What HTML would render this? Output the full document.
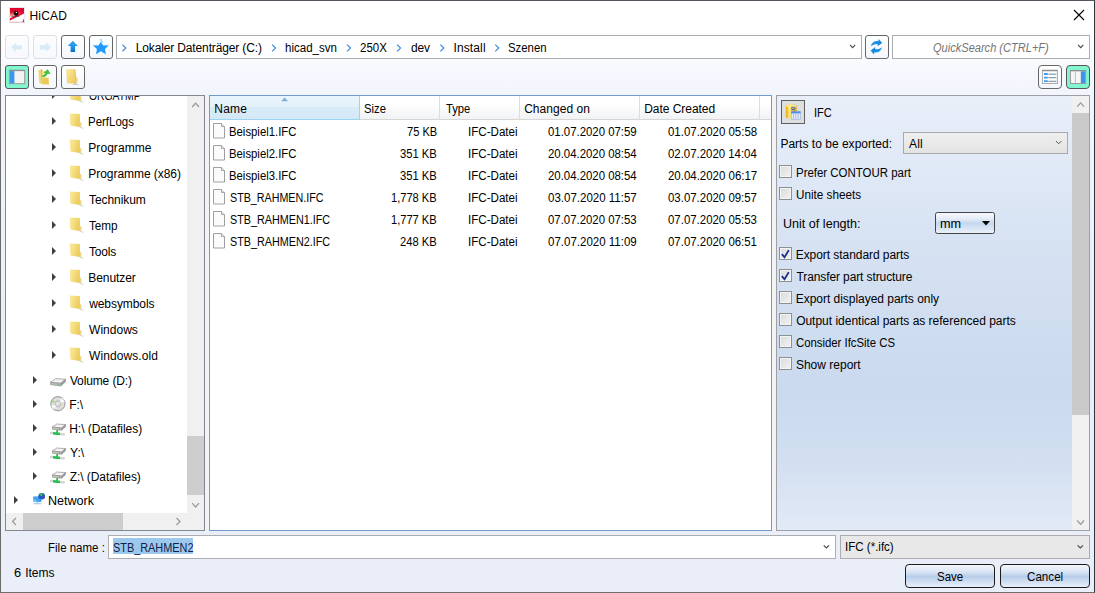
<!DOCTYPE html>
<html lang="en"><head><meta charset="utf-8"><title>HiCAD</title>
<style>
*{box-sizing:border-box;margin:0;padding:0}
html,body{width:1095px;height:593px;overflow:hidden;background:#fff}
body{font-family:"Liberation Sans",sans-serif;font-size:12px;color:#000}
#win{position:absolute;left:0;top:0;width:1095px;height:593px;overflow:hidden;
 background:linear-gradient(to bottom,#ffffff 0,#ffffff 31px,#f2f5fc 90px,#e9eef9 330px,#e9eef9 100%)}
.abs{position:absolute}
.t{transform-origin:0 50%;position:absolute;white-space:pre;line-height:16px;height:16px;font-size:12px}
#frame{left:0;top:0;width:1095px;height:593px;border:1px solid #5a5f68;border-top-color:#50555e;border-right-color:#30343c;border-left-color:#6b6b6b;border-bottom-color:#6e6e6e;z-index:50;pointer-events:none}
#titlebar{left:1px;top:1px;width:1093px;height:30px;background:#fff}
.btn{position:absolute;width:24px;height:24px;border:1px solid #666;border-radius:3px;
 background:linear-gradient(to bottom,#ffffff,#f3f6fb)}
.btn.dis{border-color:#dcdfe6;background:linear-gradient(to bottom,#fdfdfe,#f6f8fc)}
.btn.on{background:#80f7cf;border-color:#5a5558}

.box{position:absolute;background:#fff;border:1px solid #abadb3}
.panel{position:absolute;background:#fff;border:1px solid #828790}
.sb{position:absolute;background:#f0f0f0}
.thumb{position:absolute;background:#cdcdcd}
.arrow{position:absolute;width:0;height:0;border-top:4px solid transparent;border-bottom:4px solid transparent;border-left:4px solid #404040}
.hdr{position:absolute;top:96px;height:24px;border-right:1px solid #dcdddf;border-bottom:1px solid #d6d6d6;background:linear-gradient(to bottom,#ffffff 0,#ffffff 35%,#f1f2f4 100%)}
.cb{position:absolute;width:13px;height:13px;left:779px;border:1px solid #8e8f8f;background:linear-gradient(135deg,#d9dadb,#f3f3f3);box-shadow:inset 0 0 0 1px #f4f4f4}
.pbtn{position:absolute;height:24px;width:90px;top:564px;border:1px solid #1c1c1c;border-radius:4px;
 background:linear-gradient(to bottom,#f4f7fc 0,#dbe6f5 30%,#b7cde9 52%,#c9daf0 70%,#e9f0fa 100%)}
.btn.r4{border-radius:4px}

</style></head>
<body>
<div id="win">
<div class="abs" id="titlebar"></div>
<!-- app icon -->
<svg class="abs" style="left:9px;top:7px" width="16" height="16" viewBox="0 0 16 16">
 <defs><linearGradient id="gapp" x1="0" y1="0" x2="0" y2="1"><stop offset="0" stop-color="#dc0028"/><stop offset="0.280" stop-color="#e00a2e"/><stop offset="0.550" stop-color="#f4a090"/><stop offset="0.700" stop-color="#ffffff"/><stop offset="1" stop-color="#ffffff"/></linearGradient></defs>
 <rect x="0" y="0" width="16" height="16" fill="#e3e9ee"/>
 <rect x="1" y="1" width="14" height="14" fill="url(#gapp)"/>
 <path d="M1 12.800 L15 5.600 L15 15 L1 15 Z" fill="#ffffff"/>
 <path d="M1 11.200 L15 4.800 L15 6.400 L1 13.400 Z" fill="#e0082c"/>
 <path d="M13.400 15 L15 11.500 L15 15 Z" fill="#e0082c"/>
 <path d="M2.500 9.300 L10.500 9.600" stroke="#333" stroke-width="0.600"/>
 <circle cx="7.100" cy="6.400" r="2.300" fill="#0c0c10"/><circle cx="7.400" cy="5.500" r="0.700" fill="#e8e8e8"/>
 <rect x="0.500" y="14.800" width="15" height="0.700" fill="#e7a0ac"/>
</svg>
<!-- close -->
<svg class="abs" style="left:1073px;top:9px" width="12" height="12" viewBox="0 0 12 12"><path d="M1 1 L11 11 M11 1 L1 11" stroke="#000" stroke-width="1.1" fill="none"/></svg>

<!-- toolbar row 1 -->
<div class="btn dis" style="left:5px;top:35px"></div><svg class="abs" style="left:5px;top:35px" width="24" height="24" viewBox="0 0 24 24"><path d="M6.100 12.300 L10.800 7.500 L10.800 10.200 L17 10.200 L17 14.500 L10.800 14.500 L10.800 17 Z" fill="#d7ebf8"/></svg>
<div class="btn dis" style="left:33px;top:35px"></div><svg class="abs" style="left:33px;top:35px" width="24" height="24" viewBox="0 0 24 24"><path d="M18.100 12.300 L13.200 7.500 L13.200 10.200 L6.900 10.200 L6.900 14.500 L13.200 14.500 L13.200 17 Z" fill="#d7ebf8"/></svg>
<div class="btn " style="left:61px;top:35px"></div><svg class="abs" style="left:61px;top:35px" width="24" height="24" viewBox="0 0 24 24"><defs><linearGradient id="gup" x1="0" y1="0" x2="0" y2="1"><stop offset="0" stop-color="#36a8f4"/><stop offset="0.6" stop-color="#1d8fe6"/><stop offset="1" stop-color="#0a69c2"/></linearGradient></defs><path d="M11.800 5.800 L16.800 10.900 L14.100 10.900 L14.100 17.100 L9.600 17.100 L9.600 10.900 L6.800 10.900 Z" fill="url(#gup)"/></svg>
<div class="btn " style="left:89px;top:35px"></div><svg class="abs" style="left:89px;top:35px" width="24" height="24" viewBox="0 0 24 24"><polygon points="11.700,7 14.200,10.500 19.700,10.300 16,14 16.900,19.200 11.800,16.300 7.100,19.300 7.900,14 3.800,10.300 9.400,10.500" fill="#1e9bff"/><path d="M12.100 4.300 q-1.300 0.800 0.300 1.500 q1.500 0.700 0.500 1.800" fill="none" stroke="#2fa2fb" stroke-width="1"/></svg>
<div class="btn " style="left:865px;top:35px"></div><svg class="abs" style="left:865px;top:35px" width="24" height="24" viewBox="0 0 24 24"><defs><linearGradient id="grf" x1="0" y1="0" x2="1" y2="1"><stop offset="0" stop-color="#2aa6f6"/><stop offset="1" stop-color="#0d78d0"/></linearGradient></defs><path d="M5.800 11.200 C6.600 7.200 10 5.500 13.300 6.100 L13.800 4 L17.200 8 L12.400 11.300 L12.900 9.300 C10.500 8.900 8 9.500 5.800 11.200 Z" fill="url(#grf)"/><path d="M5.800 11.200 C6.600 7.200 10 5.500 13.300 6.100 L13.800 4 L17.200 8 L12.400 11.300 L12.900 9.300 C10.500 8.900 8 9.500 5.800 11.200 Z" fill="url(#grf)" transform="rotate(180 11.400 11.700)"/></svg>
<div class="btn on" style="left:5px;top:65px"></div><svg class="abs" style="left:5px;top:65px" width="24" height="24" viewBox="0 0 24 24"><rect x="4.300" y="5.300" width="15.400" height="13.400" fill="#f3f3f3" stroke="#9b8f94" stroke-width="0.900"/><rect x="4.300" y="4.900" width="15.400" height="1.200" fill="#8d8d8d"/><rect x="4.800" y="6.100" width="4.600" height="12.200" fill="#3c96e6"/></svg>
<div class="btn " style="left:33px;top:65px"></div><svg class="abs" style="left:33px;top:65px" width="24" height="24" viewBox="0 0 24 24"><path d="M5.300 5.500 L8 4 L9.300 5 L9.300 19.300 L6.300 18 Z" fill="#f1d67a"/><path d="M8 4 L9.300 5 L9.300 19.300 L8.800 19 Z" fill="#d8b54e"/>
<path d="M9.300 12.500 L15.500 12.500 L16 19.600 L9.300 19.300 Z" fill="#ecc954"/><path d="M9.300 6 L12 6 L12 12.500 L9.300 12.500 Z" fill="#f3dc88"/>
<path d="M9.800 12.800 C12.500 12.800 14.500 11 14.800 8.400 L17.800 8.400 L14 4.200 L10.800 8.400 L12.600 8.400 C12.400 10 11.500 11.200 9.800 11.600 Z" fill="#35c13c" transform="rotate(12 14 8)"/></svg>
<div class="btn " style="left:61px;top:65px"></div><svg class="abs" style="left:61px;top:65px" width="24" height="24" viewBox="0 0 24 24"><defs><linearGradient id="gfo" x1="0" y1="0" x2="1" y2="1"><stop offset="0" stop-color="#fae9a0"/><stop offset="1" stop-color="#ecc954"/></linearGradient></defs><path d="M5 4.400 L13.400 4 L14.300 5 L15 18.700 L6 18.200 Z" fill="url(#gfo)"/><path d="M13.400 4 L14.300 5 L15 18.700 L14.200 18.400 Z" fill="#d9b851"/>
<ellipse cx="15.300" cy="15" rx="1" ry="2.600" fill="#f1dd8f" stroke="#d4b24a" stroke-width="0.400"/><path d="M12 19.200 L17.500 19.500" stroke="#c4c4c4" stroke-width="1"/></svg>
<div class="btn r4" style="left:1038px;top:65px"></div><svg class="abs" style="left:1038px;top:65px" width="24" height="24" viewBox="0 0 24 24"><rect x="4.400" y="5.300" width="15" height="13.200" fill="#fbfbfb" stroke="#a3a3a3" stroke-width="0.900"/><rect x="4.400" y="4.900" width="15" height="1.300" fill="#8c8c8c"/>
<path d="M6 9 h3.800 M6 12.600 h3.800 M6 16.200 h3.800" stroke="#3b9bf5" stroke-width="1.800"/><path d="M10.400 9.200 h8 M10.400 12.700 h8 M10.400 16.300 h8" stroke="#5a7d92" stroke-width="0.900"/></svg>
<div class="btn on r4" style="left:1066px;top:65px"></div><svg class="abs" style="left:1066px;top:65px" width="24" height="24" viewBox="0 0 24 24"><rect x="4.400" y="5.500" width="15.300" height="13" fill="#f8f6f5" stroke="#9b8f94" stroke-width="0.900"/><rect x="4.400" y="5.100" width="15.300" height="1.200" fill="#8d8d8d"/>
<rect x="14.800" y="6.300" width="4.400" height="11.800" fill="#3c96e6"/><path d="M9.400 6.300 v11.800" stroke="#8cc4f2" stroke-width="0.900"/></svg>

<div class="box" style="left:116px;top:35px;width:746px;height:24px"></div>
<svg class="abs" style="left:120px;top:35px" width="740" height="24" viewBox="0 0 740 24" fill="none" stroke="#3c89dc" stroke-width="1.150">
<path d="M2.3 9.600 L5.9 13 L2.3 16.400"/>
<path d="M152.0 9.600 L155.6 13 L152.0 16.400"/>
<path d="M227.0 9.600 L230.6 13 L227.0 16.400"/>
<path d="M277.0 9.600 L280.6 13 L277.0 16.400"/>
<path d="M320.3 9.600 L323.9 13 L320.3 16.400"/>
<path d="M375.2 9.600 L378.8 13 L375.2 16.400"/>
<path d="M730 9.900 L732.600 12.600 L735.200 9.900" stroke="#4a4a4a" stroke-width="1.150"/>
</svg>
<div class="box" style="left:892px;top:35px;width:198px;height:24px"></div>
<svg class="abs" style="left:1076px;top:42px" width="10" height="10" viewBox="0 0 10 10" fill="none" stroke="#4a4a4a" stroke-width="1.150"><path d="M2.100 2.900 L4.700 5.600 L7.300 2.900"/></svg>

<!-- toolbar row 2 -->

<!-- tree panel -->
<div class="panel" id="tree" style="left:5px;top:95px;width:200px;height:436px;overflow:hidden">
 <div class="sb" style="left:181px;top:0;width:17px;height:434px"></div>
 <div class="sb" style="left:0;top:417px;width:198px;height:17px"></div>
 <div class="thumb" style="left:181px;top:340px;width:17px;height:59px"></div>
 <div class="thumb" style="left:17px;top:417px;width:100px;height:17px"></div>
 <svg class="abs" style="left:181px;top:0" width="17" height="434" viewBox="0 0 17 434" fill="none" stroke="#979797" stroke-width="1.200"><path d="M5.200 11 L8.600 7.200 L12 11"/><path d="M5.200 407.200 L8.600 411 L12 407.200"/></svg>
 <svg class="abs" style="left:0;top:417px" width="181" height="17" viewBox="0 0 181 17" fill="none" stroke="#979797" stroke-width="1.200"><path d="M10 5 L6.5 8.5 L10 12"/><path d="M170.500 5 L174 8.5 L170.5 12"/></svg>
</div>
<div class="abs" style="left:6px;top:96px;width:181px;height:417px;overflow:hidden"><div class="abs" style="left:-6px;top:-96px"><div class="arrow" style="left:52px;top:91px"></div>
<svg class="abs" style="left:69px;top:87px" width="16" height="17" viewBox="0 0 16 17"><defs><linearGradient id="gfd" x1="0" y1="0" x2="1" y2="0.300"><stop offset="0" stop-color="#faeaa2"/><stop offset="0.500" stop-color="#f5de80"/><stop offset="1" stop-color="#ebcc5e"/></linearGradient></defs><path d="M10.500 13.600 L14.600 15 L13.800 15.700 L10.500 14.300 Z" fill="#bdbdbd" opacity="0.800"/><path d="M0.800 0.400 L10.900 1.100 L10.900 13.900 L1.300 12.500 Z" fill="url(#gfd)"/><path d="M10.900 9.200 Q12.300 9 12.200 10.500 L12.200 13.400 L10.900 13.900 Z" fill="#f3e3a0" stroke="#dcc060" stroke-width="0.400"/></svg>
<div class="arrow" style="left:52px;top:117px"></div>
<svg class="abs" style="left:69px;top:113px" width="16" height="17" viewBox="0 0 16 17"><defs><linearGradient id="gfd" x1="0" y1="0" x2="1" y2="0.300"><stop offset="0" stop-color="#faeaa2"/><stop offset="0.500" stop-color="#f5de80"/><stop offset="1" stop-color="#ebcc5e"/></linearGradient></defs><path d="M10.500 13.600 L14.600 15 L13.800 15.700 L10.500 14.300 Z" fill="#bdbdbd" opacity="0.800"/><path d="M0.800 0.400 L10.900 1.100 L10.900 13.900 L1.300 12.500 Z" fill="url(#gfd)"/><path d="M10.900 9.200 Q12.300 9 12.200 10.500 L12.200 13.400 L10.900 13.900 Z" fill="#f3e3a0" stroke="#dcc060" stroke-width="0.400"/></svg>
<div class="arrow" style="left:52px;top:143px"></div>
<svg class="abs" style="left:69px;top:139px" width="16" height="17" viewBox="0 0 16 17"><defs><linearGradient id="gfd" x1="0" y1="0" x2="1" y2="0.300"><stop offset="0" stop-color="#faeaa2"/><stop offset="0.500" stop-color="#f5de80"/><stop offset="1" stop-color="#ebcc5e"/></linearGradient></defs><path d="M10.500 13.600 L14.600 15 L13.800 15.700 L10.500 14.300 Z" fill="#bdbdbd" opacity="0.800"/><path d="M0.800 0.400 L10.900 1.100 L10.900 13.900 L1.300 12.500 Z" fill="url(#gfd)"/><path d="M10.900 9.200 Q12.300 9 12.200 10.500 L12.200 13.400 L10.900 13.900 Z" fill="#f3e3a0" stroke="#dcc060" stroke-width="0.400"/></svg>
<div class="arrow" style="left:52px;top:169px"></div>
<svg class="abs" style="left:69px;top:165px" width="16" height="17" viewBox="0 0 16 17"><defs><linearGradient id="gfd" x1="0" y1="0" x2="1" y2="0.300"><stop offset="0" stop-color="#faeaa2"/><stop offset="0.500" stop-color="#f5de80"/><stop offset="1" stop-color="#ebcc5e"/></linearGradient></defs><path d="M10.500 13.600 L14.600 15 L13.800 15.700 L10.500 14.300 Z" fill="#bdbdbd" opacity="0.800"/><path d="M0.800 0.400 L10.900 1.100 L10.900 13.900 L1.300 12.500 Z" fill="url(#gfd)"/><path d="M10.900 9.200 Q12.300 9 12.200 10.500 L12.200 13.400 L10.900 13.900 Z" fill="#f3e3a0" stroke="#dcc060" stroke-width="0.400"/></svg>
<div class="arrow" style="left:52px;top:195px"></div>
<svg class="abs" style="left:69px;top:191px" width="16" height="17" viewBox="0 0 16 17"><defs><linearGradient id="gfd" x1="0" y1="0" x2="1" y2="0.300"><stop offset="0" stop-color="#faeaa2"/><stop offset="0.500" stop-color="#f5de80"/><stop offset="1" stop-color="#ebcc5e"/></linearGradient></defs><path d="M10.500 13.600 L14.600 15 L13.800 15.700 L10.500 14.300 Z" fill="#bdbdbd" opacity="0.800"/><path d="M0.800 0.400 L10.900 1.100 L10.900 13.900 L1.300 12.500 Z" fill="url(#gfd)"/><path d="M10.900 9.200 Q12.300 9 12.200 10.500 L12.200 13.400 L10.900 13.900 Z" fill="#f3e3a0" stroke="#dcc060" stroke-width="0.400"/></svg>
<div class="arrow" style="left:52px;top:221px"></div>
<svg class="abs" style="left:69px;top:217px" width="16" height="17" viewBox="0 0 16 17"><defs><linearGradient id="gfd" x1="0" y1="0" x2="1" y2="0.300"><stop offset="0" stop-color="#faeaa2"/><stop offset="0.500" stop-color="#f5de80"/><stop offset="1" stop-color="#ebcc5e"/></linearGradient></defs><path d="M10.500 13.600 L14.600 15 L13.800 15.700 L10.500 14.300 Z" fill="#bdbdbd" opacity="0.800"/><path d="M0.800 0.400 L10.900 1.100 L10.900 13.900 L1.300 12.500 Z" fill="url(#gfd)"/><path d="M10.900 9.200 Q12.300 9 12.200 10.500 L12.200 13.400 L10.900 13.900 Z" fill="#f3e3a0" stroke="#dcc060" stroke-width="0.400"/></svg>
<div class="arrow" style="left:52px;top:247px"></div>
<svg class="abs" style="left:69px;top:243px" width="16" height="17" viewBox="0 0 16 17"><defs><linearGradient id="gfd" x1="0" y1="0" x2="1" y2="0.300"><stop offset="0" stop-color="#faeaa2"/><stop offset="0.500" stop-color="#f5de80"/><stop offset="1" stop-color="#ebcc5e"/></linearGradient></defs><path d="M10.500 13.600 L14.600 15 L13.800 15.700 L10.500 14.300 Z" fill="#bdbdbd" opacity="0.800"/><path d="M0.800 0.400 L10.900 1.100 L10.900 13.900 L1.300 12.500 Z" fill="url(#gfd)"/><path d="M10.900 9.200 Q12.300 9 12.200 10.500 L12.200 13.400 L10.900 13.900 Z" fill="#f3e3a0" stroke="#dcc060" stroke-width="0.400"/></svg>
<div class="arrow" style="left:52px;top:273px"></div>
<svg class="abs" style="left:69px;top:269px" width="16" height="17" viewBox="0 0 16 17"><defs><linearGradient id="gfd" x1="0" y1="0" x2="1" y2="0.300"><stop offset="0" stop-color="#faeaa2"/><stop offset="0.500" stop-color="#f5de80"/><stop offset="1" stop-color="#ebcc5e"/></linearGradient></defs><path d="M10.500 13.600 L14.600 15 L13.800 15.700 L10.500 14.300 Z" fill="#bdbdbd" opacity="0.800"/><path d="M0.800 0.400 L10.900 1.100 L10.900 13.900 L1.300 12.500 Z" fill="url(#gfd)"/><path d="M10.900 9.200 Q12.300 9 12.200 10.500 L12.200 13.400 L10.900 13.900 Z" fill="#f3e3a0" stroke="#dcc060" stroke-width="0.400"/></svg>
<div class="arrow" style="left:52px;top:299px"></div>
<svg class="abs" style="left:69px;top:295px" width="16" height="17" viewBox="0 0 16 17"><defs><linearGradient id="gfd" x1="0" y1="0" x2="1" y2="0.300"><stop offset="0" stop-color="#faeaa2"/><stop offset="0.500" stop-color="#f5de80"/><stop offset="1" stop-color="#ebcc5e"/></linearGradient></defs><path d="M10.500 13.600 L14.600 15 L13.800 15.700 L10.500 14.300 Z" fill="#bdbdbd" opacity="0.800"/><path d="M0.800 0.400 L10.900 1.100 L10.900 13.900 L1.300 12.500 Z" fill="url(#gfd)"/><path d="M10.900 9.200 Q12.300 9 12.200 10.500 L12.200 13.400 L10.900 13.900 Z" fill="#f3e3a0" stroke="#dcc060" stroke-width="0.400"/></svg>
<div class="arrow" style="left:52px;top:325px"></div>
<svg class="abs" style="left:69px;top:321px" width="16" height="17" viewBox="0 0 16 17"><defs><linearGradient id="gfd" x1="0" y1="0" x2="1" y2="0.300"><stop offset="0" stop-color="#faeaa2"/><stop offset="0.500" stop-color="#f5de80"/><stop offset="1" stop-color="#ebcc5e"/></linearGradient></defs><path d="M10.500 13.600 L14.600 15 L13.800 15.700 L10.500 14.300 Z" fill="#bdbdbd" opacity="0.800"/><path d="M0.800 0.400 L10.900 1.100 L10.900 13.900 L1.300 12.500 Z" fill="url(#gfd)"/><path d="M10.900 9.200 Q12.300 9 12.200 10.500 L12.200 13.400 L10.900 13.900 Z" fill="#f3e3a0" stroke="#dcc060" stroke-width="0.400"/></svg>
<div class="arrow" style="left:52px;top:351px"></div>
<svg class="abs" style="left:69px;top:347px" width="16" height="17" viewBox="0 0 16 17"><defs><linearGradient id="gfd" x1="0" y1="0" x2="1" y2="0.300"><stop offset="0" stop-color="#faeaa2"/><stop offset="0.500" stop-color="#f5de80"/><stop offset="1" stop-color="#ebcc5e"/></linearGradient></defs><path d="M10.500 13.600 L14.600 15 L13.800 15.700 L10.500 14.300 Z" fill="#bdbdbd" opacity="0.800"/><path d="M0.800 0.400 L10.900 1.100 L10.900 13.900 L1.300 12.500 Z" fill="url(#gfd)"/><path d="M10.900 9.200 Q12.300 9 12.200 10.500 L12.200 13.400 L10.900 13.900 Z" fill="#f3e3a0" stroke="#dcc060" stroke-width="0.400"/></svg>
<div class="arrow" style="left:33px;top:376px"></div>
<svg class="abs" style="left:50px;top:372px" width="16" height="16" viewBox="0 0 16 16"><path d="M0.400 10.300 L5.600 6.600 L15.600 7.300 L10.800 11.300 Z" fill="#f3f3f3" stroke="#8c8c8c" stroke-width="0.700"/><path d="M0.400 10.300 L10.800 11.300 L10.800 14 L0.400 12.800 Z" fill="#b9b9b9" stroke="#8c8c8c" stroke-width="0.500"/><path d="M10.800 11.300 L15.600 7.300 L15.600 9.800 L10.800 14 Z" fill="#9c9c9c" stroke="#8c8c8c" stroke-width="0.500"/><circle cx="8.300" cy="12.900" r="0.700" fill="#22c040"/></svg>
<div class="arrow" style="left:33px;top:400px"></div>
<svg class="abs" style="left:50px;top:396px" width="16" height="16" viewBox="0 0 16 16"><defs><radialGradient id="gcd" cx="0.5" cy="0.5" r="0.5"><stop offset="0" stop-color="#f4f4f4"/><stop offset="0.350" stop-color="#c9c9c9"/><stop offset="0.700" stop-color="#e3e3e3"/><stop offset="1" stop-color="#c4c4c4"/></radialGradient></defs><circle cx="7.900" cy="7.700" r="7.200" fill="url(#gcd)" stroke="#8f8f8f" stroke-width="0.800"/><path d="M7.900 7.700 L11.800 1.800 A7 7 0 0 1 14.700 6 Z" fill="#fafafa" opacity="0.850"/><path d="M7.900 7.700 L4 13.600 A7 7 0 0 1 1.100 9.400 Z" fill="#fafafa" opacity="0.850"/><path d="M2.300 4.300 L4.300 5.400 L3.600 6.600 L1.700 5.800 Z" fill="#7fdc50"/><path d="M13.600 9.300 L11.400 8.800 L11.500 10 L13.300 10.600 Z" fill="#f0e890"/><circle cx="7.900" cy="7.700" r="2.700" fill="#e9e9e9" stroke="#a4a4a4" stroke-width="0.600"/><circle cx="7.900" cy="7.700" r="1.100" fill="#ffffff" stroke="#b0b0b0" stroke-width="0.400"/></svg>
<div class="arrow" style="left:33px;top:424px"></div>
<svg class="abs" style="left:50px;top:420px" width="16" height="16" viewBox="0 0 16 16"><path d="M2.300 7 L6.800 4 L15.600 4.600 L11.600 8 Z" fill="#f3f3f3" stroke="#8c8c8c" stroke-width="0.700"/><path d="M2.300 7 L11.600 8 L11.600 10.300 L2.300 9.300 Z" fill="#b9b9b9" stroke="#8c8c8c" stroke-width="0.500"/><path d="M11.600 8 L15.600 4.600 L15.600 6.800 L11.600 10.300 Z" fill="#9c9c9c" stroke="#8c8c8c" stroke-width="0.500"/><circle cx="9.600" cy="9.300" r="0.600" fill="#22c040"/><path d="M0.300 12.900 L13.900 14.300" stroke="#cfd3d3" stroke-width="2.300" stroke-linecap="round"/><path d="M3.200 13.200 L9.900 13.900" stroke="#1fc050" stroke-width="2.500"/><path d="M7.200 10 L7 13" stroke="#1fc050" stroke-width="1.800"/></svg>
<div class="arrow" style="left:33px;top:448px"></div>
<svg class="abs" style="left:50px;top:444px" width="16" height="16" viewBox="0 0 16 16"><path d="M2.300 7 L6.800 4 L15.600 4.600 L11.600 8 Z" fill="#f3f3f3" stroke="#8c8c8c" stroke-width="0.700"/><path d="M2.300 7 L11.600 8 L11.600 10.300 L2.300 9.300 Z" fill="#b9b9b9" stroke="#8c8c8c" stroke-width="0.500"/><path d="M11.600 8 L15.600 4.600 L15.600 6.800 L11.600 10.300 Z" fill="#9c9c9c" stroke="#8c8c8c" stroke-width="0.500"/><circle cx="9.600" cy="9.300" r="0.600" fill="#22c040"/><path d="M0.300 12.900 L13.900 14.300" stroke="#cfd3d3" stroke-width="2.300" stroke-linecap="round"/><path d="M3.200 13.200 L9.900 13.900" stroke="#1fc050" stroke-width="2.500"/><path d="M7.200 10 L7 13" stroke="#1fc050" stroke-width="1.800"/></svg>
<div class="arrow" style="left:33px;top:472px"></div>
<svg class="abs" style="left:50px;top:468px" width="16" height="16" viewBox="0 0 16 16"><path d="M2.300 7 L6.800 4 L15.600 4.600 L11.600 8 Z" fill="#f3f3f3" stroke="#8c8c8c" stroke-width="0.700"/><path d="M2.300 7 L11.600 8 L11.600 10.300 L2.300 9.300 Z" fill="#b9b9b9" stroke="#8c8c8c" stroke-width="0.500"/><path d="M11.600 8 L15.600 4.600 L15.600 6.800 L11.600 10.300 Z" fill="#9c9c9c" stroke="#8c8c8c" stroke-width="0.500"/><circle cx="9.600" cy="9.300" r="0.600" fill="#22c040"/><path d="M0.300 12.900 L13.900 14.300" stroke="#cfd3d3" stroke-width="2.300" stroke-linecap="round"/><path d="M3.200 13.200 L9.900 13.900" stroke="#1fc050" stroke-width="2.500"/><path d="M7.200 10 L7 13" stroke="#1fc050" stroke-width="1.800"/></svg>
<div class="arrow" style="left:14px;top:496px"></div>
<svg class="abs" style="left:32px;top:492px" width="16" height="16" viewBox="0 0 16 16"><rect x="1.200" y="4.400" width="8.200" height="5.600" fill="#3fa2f2"/><path d="M1.200 10 L1.200 6.500 L6 10 Z" fill="#7cc4f8"/><path d="M1.500 11.700 h8" stroke="#9ccaf0" stroke-width="1.100"/><path d="M5.300 10 v1.500" stroke="#9ccaf0" stroke-width="1.600"/><circle cx="9.700" cy="4.200" r="3.300" fill="#2458c8"/><path d="M7.300 2.600 q1.600 -1.800 3.400 -1.200 q0.300 1.600 -1.200 2.600 q-1.400 0.200 -2.200 -1.400z" fill="#38c648"/><path d="M12.900 4 a3.300 3.300 0 0 1 -2.500 3.400 q2 -1.200 2.500 -3.400z" fill="#8a3ab0"/></svg></div></div>

<!-- splitters -->
<div class="abs" style="left:205px;top:95px;width:4px;height:436px;background:#f3f3f3"></div>
<div class="abs" style="left:772px;top:95px;width:4px;height:436px;background:#f3f3f3"></div>
<!-- file list -->
<div class="panel" style="left:209px;top:95px;width:563px;height:436px;border-color:#709ccd"></div>
<div class="hdr" style="left:210px;width:150px;background:linear-gradient(to bottom,#eaf5fc 0,#e4f1fa 46%,#d8ebf8 50%,#d3e8f6 100%);border-right:1px solid #9ed4f3;border-bottom:1px solid #9ed4f3"></div>
<div class="hdr" style="left:360px;width:80px"></div>
<div class="hdr" style="left:440px;width:80px"></div>
<div class="hdr" style="left:520px;width:120px"></div>
<div class="hdr" style="left:640px;width:120px"></div>
<div class="hdr" style="left:760px;width:11px;border-right:none"></div>
<svg class="abs" style="left:281px;top:97px" width="8" height="5" viewBox="0 0 8 5"><path d="M0.300 4.300 L3.600 0.500 L6.900 4.300 Z" fill="#7dabd8"/></svg>
<svg class="abs" style="left:213px;top:123px" width="13" height="16" viewBox="0 0 13 16"><path d="M0.500 0.500 L8.500 0.500 L11.500 3.500 L11.500 15 L0.500 15 Z" fill="#fbfbfb" stroke="#959595" stroke-width="0.900"/><path d="M8.500 0.500 L8.500 3.500 L11.500 3.500" fill="#ececec" stroke="#959595" stroke-width="0.800"/></svg>
<svg class="abs" style="left:213px;top:145px" width="13" height="16" viewBox="0 0 13 16"><path d="M0.500 0.500 L8.500 0.500 L11.500 3.500 L11.500 15 L0.500 15 Z" fill="#fbfbfb" stroke="#959595" stroke-width="0.900"/><path d="M8.500 0.500 L8.500 3.500 L11.500 3.500" fill="#ececec" stroke="#959595" stroke-width="0.800"/></svg>
<svg class="abs" style="left:213px;top:167px" width="13" height="16" viewBox="0 0 13 16"><path d="M0.500 0.500 L8.500 0.500 L11.500 3.500 L11.500 15 L0.500 15 Z" fill="#fbfbfb" stroke="#959595" stroke-width="0.900"/><path d="M8.500 0.500 L8.500 3.500 L11.500 3.500" fill="#ececec" stroke="#959595" stroke-width="0.800"/></svg>
<svg class="abs" style="left:213px;top:189px" width="13" height="16" viewBox="0 0 13 16"><path d="M0.500 0.500 L8.500 0.500 L11.500 3.500 L11.500 15 L0.500 15 Z" fill="#fbfbfb" stroke="#959595" stroke-width="0.900"/><path d="M8.500 0.500 L8.500 3.500 L11.500 3.500" fill="#ececec" stroke="#959595" stroke-width="0.800"/></svg>
<svg class="abs" style="left:213px;top:211px" width="13" height="16" viewBox="0 0 13 16"><path d="M0.500 0.500 L8.500 0.500 L11.500 3.500 L11.500 15 L0.500 15 Z" fill="#fbfbfb" stroke="#959595" stroke-width="0.900"/><path d="M8.500 0.500 L8.500 3.500 L11.500 3.500" fill="#ececec" stroke="#959595" stroke-width="0.800"/></svg>
<svg class="abs" style="left:213px;top:233px" width="13" height="16" viewBox="0 0 13 16"><path d="M0.500 0.500 L8.500 0.500 L11.500 3.500 L11.500 15 L0.500 15 Z" fill="#fbfbfb" stroke="#959595" stroke-width="0.900"/><path d="M8.500 0.500 L8.500 3.500 L11.500 3.500" fill="#ececec" stroke="#959595" stroke-width="0.800"/></svg>

<!-- right panel -->
<div class="panel" style="left:776px;top:95px;width:314px;height:436px;border-color:#9c9fa6;background:linear-gradient(to bottom,#e9eff9 0,#d7e3f3 32%,#cad9ee 68%,#d2dff1 84%,#e2eaf6 100%)"></div>
<div class="sb" style="left:1072px;top:96px;width:17px;height:434px"></div>
<div class="thumb" style="left:1072px;top:113px;width:17px;height:302px;background:#cacaca"></div>
<svg class="abs" style="left:1072px;top:96px" width="17" height="434" viewBox="0 0 17 434" fill="none" stroke="#979797" stroke-width="1.200"><path d="M5.200 10.700 L8.600 6.900 L12 10.700"/><path d="M5.200 424.500 L8.600 428.300 L12 424.500"/></svg>
<div class="abs" style="left:781px;top:100px;width:24px;height:24px;border:1px solid #5e5e5e;background:#dedede"></div>
<svg class="abs" style="left:781px;top:100px" width="24" height="24" viewBox="0 0 24 24"><defs><linearGradient id="gcyl" x1="0" y1="0" x2="1" y2="0"><stop offset="0" stop-color="#e9a800"/><stop offset="0.350" stop-color="#fdea8c"/><stop offset="0.700" stop-color="#f2c230"/><stop offset="1" stop-color="#dc9c00"/></linearGradient></defs>
<path d="M4.900 6 A5.300 1.800 0 0 1 15.500 6 L15.500 16.800 A5.300 1.800 0 0 1 4.900 16.800 Z" fill="url(#gcyl)"/><ellipse cx="10.200" cy="6" rx="5" ry="1.500" fill="#fbe590"/>
<rect x="10.400" y="6.800" width="3.200" height="3.400" fill="#3f62a8"/><rect x="11.200" y="7.600" width="1.500" height="1.400" fill="#f0d060"/>
<rect x="10.200" y="13" width="9.200" height="6.600" fill="#e2e9f6" stroke="#9db2dc" stroke-width="0.600"/><rect x="10" y="11.300" width="9.600" height="2" fill="#4b8ff0"/>
<path d="M12.500 13.300 v6 M14.800 13.300 v6 M17.100 13.300 v6" stroke="#a6b9de" stroke-width="0.800"/></svg>
<div class="abs" style="left:903px;top:132px;width:165px;height:22px;border:1px solid #a9a9a9;background:linear-gradient(to bottom,#efefef,#e3e3e3)"></div>
<svg class="abs" style="left:1053px;top:138px" width="10" height="10" viewBox="0 0 10 10" fill="none" stroke="#5a5a5a" stroke-width="1"><path d="M3 3 L5.700 5.800 L8.400 3"/></svg>
<div class="cb" style="top:165px"></div>
<div class="cb" style="top:187px"></div>
<div class="abs" style="left:935px;top:212px;width:60px;height:22px;border:1px solid #444;border-radius:2.500px;background:linear-gradient(to bottom,#f6f9fd 0,#e4ecf8 30%,#c6d8ee 50%,#d3e1f3 70%,#eaf1fa 100%)"></div>
<svg class="abs" style="left:981px;top:220px" width="10" height="7" viewBox="0 0 10 7"><path d="M0.900 1 L9 1 L4.950 5.500 Z" fill="#000"/></svg>
<div class="cb" style="top:247px"></div>
<div class="cb" style="top:269px"></div>
<div class="cb" style="top:291px"></div>
<div class="cb" style="top:313px"></div>
<div class="cb" style="top:335px"></div>
<div class="cb" style="top:357px"></div>
<svg class="abs" style="left:779px;top:247px" width="13" height="13" viewBox="0 0 13 13" fill="none" stroke="#182c8c" stroke-width="1.800"><path d="M2.900 7.100 L5.500 10.300 L9.800 3.100"/></svg>
<svg class="abs" style="left:779px;top:269px" width="13" height="13" viewBox="0 0 13 13" fill="none" stroke="#182c8c" stroke-width="1.800"><path d="M2.900 7.100 L5.500 10.300 L9.800 3.100"/></svg>

<!-- bottom -->
<div class="box" style="left:108px;top:535px;width:728px;height:24px"></div>
<div class="abs" style="left:113px;top:538px;width:80px;height:16px;background:#9cc8ee"></div>
<svg class="abs" style="left:821px;top:542px" width="10" height="10" viewBox="0 0 10 10" fill="none" stroke="#4a4a4a" stroke-width="1.150"><path d="M2.700 3.300 L5.400 6 L8.100 3.300"/></svg>
<div class="abs" style="left:840px;top:535px;width:250px;height:24px;border:1px solid #adadad;background:#e8e8e8"></div>
<svg class="abs" style="left:1075px;top:542px" width="10" height="10" viewBox="0 0 10 10" fill="none" stroke="#4a4a4a" stroke-width="1.150"><path d="M2.600 3.300 L5.300 6 L8 3.300"/></svg>
<div class="pbtn" style="left:905px"></div>
<div class="pbtn" style="left:1000px"></div>
<div class="abs" id="frame"></div>

<span class="t" id="title" style="left:29.45px;top:8.0px;letter-spacing:0.187px;">HiCAD</span>
<span class="t" id="bc0" style="left:135.70px;top:39.5px;letter-spacing:-0.136px;">Lokaler Datenträger (C:)</span>
<span class="t" id="bc1" style="left:285.31px;top:39.5px;transform:scaleX(0.9606);">hicad_svn</span>
<span class="t" id="bc2" style="left:360.31px;top:39.5px;transform:scaleX(0.9566);">250X</span>
<span class="t" id="bc3" style="left:411.02px;top:39.5px;letter-spacing:-0.222px;">dev</span>
<span class="t" id="bc4" style="left:453.42px;top:39.5px;letter-spacing:0.138px;">Install</span>
<span class="t" id="bc5" style="left:508.47px;top:39.5px;transform:scaleX(0.9461);">Szenen</span>
<span class="t" id="qs" style="left:932.57px;top:39.5px;transform:scaleX(0.9212);font-style:italic;color:#757575;">QuickSearch (CTRL+F)</span>
<span class="t" id="tr0" style="left:89.29px;top:88.0px;transform:scaleX(0.8626);clip-path:inset(8px 0 0 0);">ORGATMP</span>
<span class="t" id="tr1" style="left:88.28px;top:114.0px;transform:scaleX(0.9552);">PerfLogs</span>
<span class="t" id="tr2" style="left:88.30px;top:140.0px;letter-spacing:0.056px;">Programme</span>
<span class="t" id="tr3" style="left:88.30px;top:166.0px;letter-spacing:-0.047px;">Programme (x86)</span>
<span class="t" id="tr4" style="left:89.02px;top:192.0px;letter-spacing:-0.071px;">Technikum</span>
<span class="t" id="tr5" style="left:89.41px;top:218.0px;transform:scaleX(0.9754);">Temp</span>
<span class="t" id="tr6" style="left:89.02px;top:244.0px;letter-spacing:-0.186px;">Tools</span>
<span class="t" id="tr7" style="left:88.30px;top:270.0px;letter-spacing:-0.086px;">Benutzer</span>
<span class="t" id="tr8" style="left:89.16px;top:296.0px;letter-spacing:-0.072px;">websymbols</span>
<span class="t" id="tr9" style="left:89.10px;top:322.0px;letter-spacing:0.012px;">Windows</span>
<span class="t" id="tr10" style="left:89.04px;top:348.0px;letter-spacing:0.086px;">Windows.old</span>
<span class="t" id="dr0" style="left:69.90px;top:373.0px;letter-spacing:-0.125px;">Volume (D:)</span>
<span class="t" id="dr1" style="left:69.23px;top:397.0px;letter-spacing:-0.063px;">F:\</span>
<span class="t" id="dr2" style="left:69.23px;top:421.0px;letter-spacing:-0.030px;">H:\ (Datafiles)</span>
<span class="t" id="dr3" style="left:69.86px;top:445.0px;transform:scaleX(1.0186);">Y:\</span>
<span class="t" id="dr4" style="left:69.81px;top:469.0px;letter-spacing:-0.072px;">Z:\ (Datafiles)</span>
<span class="t" id="net" style="left:48.07px;top:493.0px;transform:scaleX(1.0468);">Network</span>
<span class="t" id="h0" style="left:214.30px;top:100.5px;letter-spacing:0.197px;">Name</span>
<span class="t" id="h1" style="left:364.11px;top:100.5px;transform:scaleX(0.9381);">Size</span>
<span class="t" id="h2" style="left:445.71px;top:100.5px;transform:scaleX(0.9360);">Type</span>
<span class="t" id="h3" style="left:524.17px;top:100.5px;letter-spacing:0.042px;">Changed on</span>
<span class="t" id="h4" style="left:644.23px;top:100.5px;letter-spacing:-0.039px;">Date Created</span>
<span class="t" id="fn0" style="left:229.28px;top:124.0px;transform:scaleX(0.9452);">Beispiel1.IFC</span>
<span class="t" id="fs0" style="left:407.06px;top:124.0px;transform:scaleX(0.9224);">75 KB</span>
<span class="t" id="ft0" style="left:467.59px;top:124.0px;transform:scaleX(0.9656);">IFC-Datei</span>
<span class="t" id="fc0" style="left:548.04px;top:124.0px;transform:scaleX(0.9493);">01.07.2020 07:59</span>
<span class="t" id="fd0" style="left:667.93px;top:124.0px;transform:scaleX(0.9543);">01.07.2020 05:58</span>
<span class="t" id="fn1" style="left:229.28px;top:146.0px;transform:scaleX(0.9452);">Beispiel2.IFC</span>
<span class="t" id="fs1" style="left:399.96px;top:146.0px;transform:scaleX(0.9353);">351 KB</span>
<span class="t" id="ft1" style="left:467.59px;top:146.0px;transform:scaleX(0.9656);">IFC-Datei</span>
<span class="t" id="fc1" style="left:548.10px;top:146.0px;transform:scaleX(0.9495);">20.04.2020 08:54</span>
<span class="t" id="fd1" style="left:667.93px;top:146.0px;transform:scaleX(0.9506);">02.07.2020 14:04</span>
<span class="t" id="fn2" style="left:229.28px;top:168.0px;transform:scaleX(0.9452);">Beispiel3.IFC</span>
<span class="t" id="fs2" style="left:399.96px;top:168.0px;transform:scaleX(0.9353);">351 KB</span>
<span class="t" id="ft2" style="left:467.59px;top:168.0px;transform:scaleX(0.9656);">IFC-Datei</span>
<span class="t" id="fc2" style="left:548.10px;top:168.0px;transform:scaleX(0.9495);">20.04.2020 08:54</span>
<span class="t" id="fd2" style="left:667.79px;top:168.0px;transform:scaleX(0.9547);">20.04.2020 06:17</span>
<span class="t" id="fn3" style="left:229.57px;top:190.0px;transform:scaleX(0.8933);">STB_RAHMEN.IFC</span>
<span class="t" id="fs3" style="left:391.16px;top:190.0px;transform:scaleX(0.9249);">1,778 KB</span>
<span class="t" id="ft3" style="left:467.59px;top:190.0px;transform:scaleX(0.9656);">IFC-Datei</span>
<span class="t" id="fc3" style="left:548.06px;top:190.0px;transform:scaleX(0.9590);">03.07.2020 11:57</span>
<span class="t" id="fd3" style="left:667.93px;top:190.0px;transform:scaleX(0.9524);">03.07.2020 09:57</span>
<span class="t" id="fn4" style="left:229.51px;top:212.0px;transform:scaleX(0.8992);">STB_RAHMEN1.IFC</span>
<span class="t" id="fs4" style="left:391.16px;top:212.0px;transform:scaleX(0.9249);">1,777 KB</span>
<span class="t" id="ft4" style="left:467.59px;top:212.0px;transform:scaleX(0.9656);">IFC-Datei</span>
<span class="t" id="fc4" style="left:547.50px;top:212.0px;transform:scaleX(0.9494);">07.07.2020 07:53</span>
<span class="t" id="fd4" style="left:667.78px;top:212.0px;transform:scaleX(0.9524);">07.07.2020 05:53</span>
<span class="t" id="fn5" style="left:229.51px;top:234.0px;transform:scaleX(0.8992);">STB_RAHMEN2.IFC</span>
<span class="t" id="fs5" style="left:400.38px;top:234.0px;transform:scaleX(0.9319);">248 KB</span>
<span class="t" id="ft5" style="left:467.59px;top:234.0px;transform:scaleX(0.9656);">IFC-Datei</span>
<span class="t" id="fc5" style="left:548.06px;top:234.0px;transform:scaleX(0.9590);">07.07.2020 11:09</span>
<span class="t" id="fd5" style="left:667.63px;top:234.0px;transform:scaleX(0.9524);">07.07.2020 06:51</span>
<span class="t" id="ifc" style="left:813.64px;top:105.0px;transform:scaleX(0.9200);">IFC</span>
<span class="t" id="pe" style="left:780.40px;top:136.0px;letter-spacing:0.014px;">Parts to be exported:</span>
<span class="t" id="all" style="left:909.04px;top:136.0px;letter-spacing:0.192px;">All</span>
<span class="t" id="c0" style="left:795.80px;top:165.0px;transform:scaleX(0.9539);">Prefer CONTOUR part</span>
<span class="t" id="c1" style="left:795.95px;top:187.0px;transform:scaleX(0.9749);">Unite sheets</span>
<span class="t" id="ul" style="left:783.46px;top:216.0px;transform:scaleX(1.0480);">Unit of length:</span>
<span class="t" id="mm" style="left:939.86px;top:216.0px;transform:scaleX(1.0556);">mm</span>
<span class="t" id="c2" style="left:795.70px;top:247.0px;letter-spacing:-0.056px;">Export standard parts</span>
<span class="t" id="c3" style="left:796.46px;top:269.0px;letter-spacing:-0.104px;">Transfer part structure</span>
<span class="t" id="c4" style="left:795.70px;top:291.0px;letter-spacing:-0.027px;">Export displayed parts only</span>
<span class="t" id="c5" style="left:796.14px;top:313.0px;letter-spacing:-0.010px;">Output identical parts as referenced parts</span>
<span class="t" id="c6" style="left:796.49px;top:335.0px;transform:scaleX(0.9453);">Consider IfcSite CS</span>
<span class="t" id="c7" style="left:795.95px;top:357.0px;letter-spacing:0.003px;">Show report</span>
<span class="t" id="fnl" style="left:48.28px;top:540.0px;transform:scaleX(0.9577);">File name :</span>
<span class="t" id="fnv" style="left:112.67px;top:540.0px;transform:scaleX(0.9074);color:#10204a;">STB_RAHMEN2</span>
<span class="t" id="flt" style="left:844.64px;top:539.0px;transform:scaleX(0.9616);">IFC (*.ifc)</span>
<span class="t" id="six" style="left:13.69px;top:565.0px;transform:scaleX(1.0719);">6</span>
<span class="t" id="items" style="left:25.15px;top:565.0px;letter-spacing:0.015px;">Items</span>
<span class="t" id="save" style="left:936.90px;top:569.0px;transform:scaleX(0.9578);">Save</span>
<span class="t" id="cancel" style="left:1026.51px;top:569.0px;transform:scaleX(0.9691);">Cancel</span>
</div>
</body></html>
